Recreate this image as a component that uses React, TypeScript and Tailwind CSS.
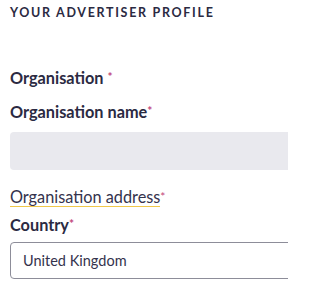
function Req() {
  return <span className="inline-block pt-[4px] align-top leading-none text-[12px] text-[#c2457a]">*</span>;
}

export default function App() {
  return (
    <div className="w-[288px] h-[288px] overflow-hidden bg-white pl-[10px] pt-[4px] flex flex-col font-['Lato',sans-serif] text-[#2b2a42]">
      <h2 className="text-[12.5px] leading-[18px] font-bold tracking-[0.135em] uppercase">
        Your advertiser profile
      </h2>

      <div className="mt-[45px] flex flex-col gap-[12px]">
        <div className="text-[16.3px] leading-[22px] font-bold">
          Organisation <Req />
        </div>

        <div className="flex flex-col gap-[9px]">
          <label className="text-[16.3px] leading-[22px] font-bold">
            Organisation name<Req />
          </label>
          <div className="h-[38px] w-[290px] rounded-l-[4px] bg-[#e9e9ee]" />
        </div>
      </div>

      <div className="mt-[17px] flex flex-col gap-[7px]">
        <div className="text-[16.3px] leading-[20px] text-[#34334d]">
          <span className="border-b border-[#f0c84a]">Organisation address</span>
          <Req />
        </div>

        <div className="flex flex-col gap-[6px]">
          <label className="text-[16.3px] leading-[22px] font-bold">
            Country<Req />
          </label>
          <div className="h-[37px] w-[290px] rounded-l-[4px] border border-[#8d8d99] flex items-center pl-[12px] text-[14.5px] text-[#34334d]">
            United Kingdom
          </div>
        </div>
      </div>
    </div>
  );
}
